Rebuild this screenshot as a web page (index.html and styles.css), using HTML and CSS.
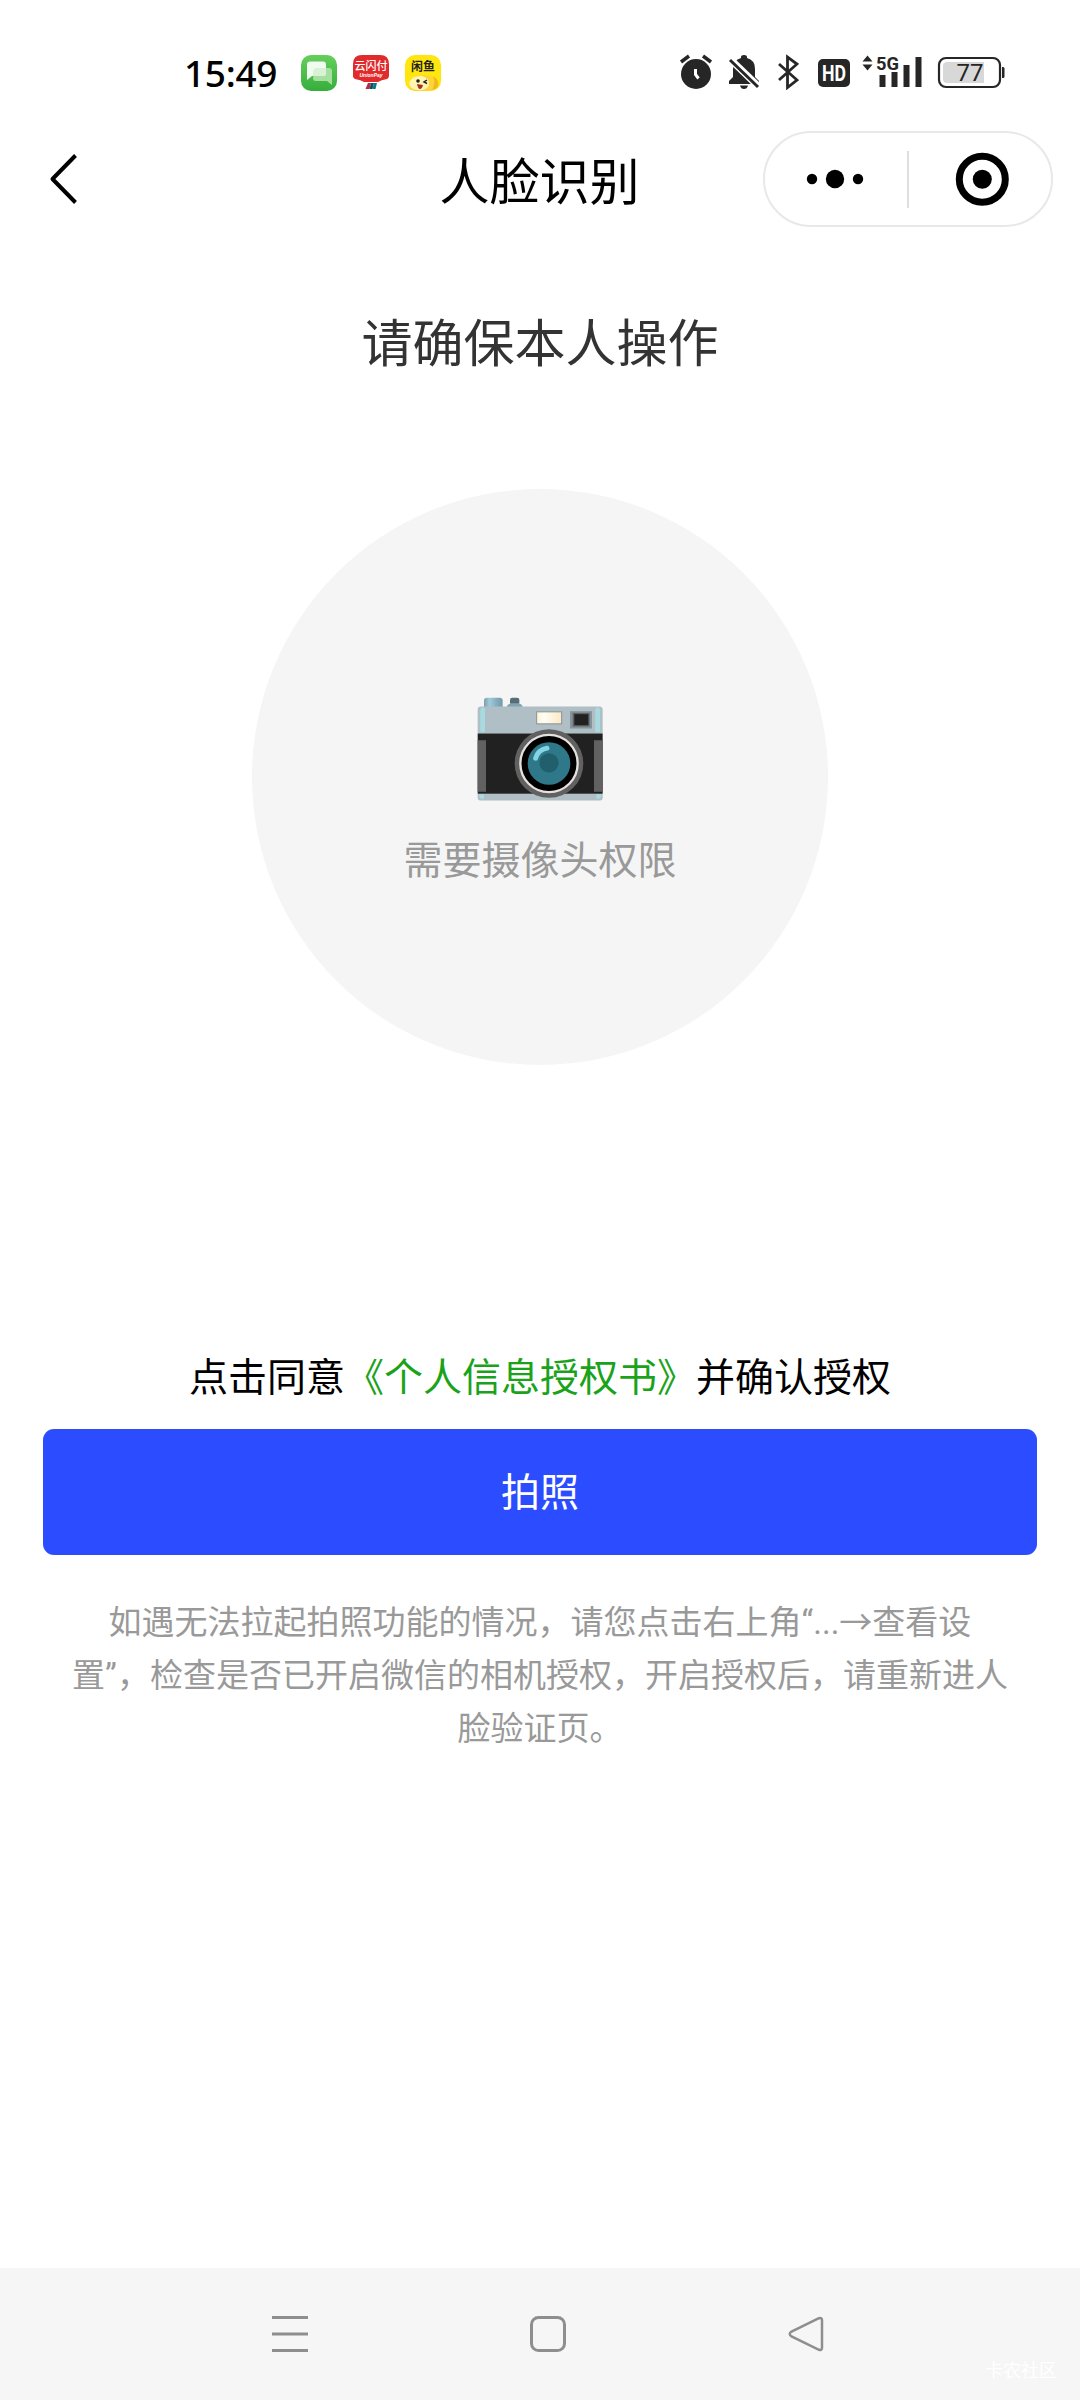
FILE: index.html
```html
<!DOCTYPE html>
<html lang="zh-CN">
<head>
<meta charset="utf-8">
<title>人脸识别</title>
<link rel="stylesheet" href="styles.css">
</head>
<body>
<div class="screen">
  <header class="status">
    <div class="status-left">
      <span class="time">15:49</span>
      <svg class="app" viewBox="0 0 36 36">
        <defs><linearGradient id="msg" x1="0" y1="0" x2="0" y2="1"><stop offset="0" stop-color="#66cf5c"/><stop offset="1" stop-color="#36ae3c"/></linearGradient></defs>
        <rect width="36" height="36" rx="10" fill="url(#msg)"/>
        <path d="M14 13h14a3 3 0 0 1 3 3v14l-5-4H15a3 3 0 0 1-3-3z" fill="#a5e0a0"/>
        <path d="M9 6.500h13a3 3 0 0 1 3 3V18a3 3 0 0 1-3 3H11l-5 4V9.500a3 3 0 0 1 3-3z" fill="#f2fbf0"/>
        <path d="M14 13h11v5a3 3 0 0 1-3 3H12v-5z" fill="#d9f2d6"/>
      </svg>
      <svg class="app" viewBox="0 0 36 36">
        <path d="M0 9Q0 0 9 0h18q9 0 9 9v12q0 2-2 3-6 1-9 3H11q-3-2-9-3-2-1-2-3z" fill="#e12a2b"/>
        <text x="18" y="15" class="pay">云闪付</text>
        <text x="18" y="22" class="pay-en">UnionPay</text>
        <path d="M15 28h3l-1.500 6h-4z" fill="#b52d3c"/><path d="M18 28h3l-1.500 6h-3z" fill="#164a72"/><path d="M21 28h3l-1.500 6h-3z" fill="#087c7c"/>
      </svg>
      <svg class="app" viewBox="0 0 36 36">
        <rect width="36" height="36" rx="10" fill="#ffe60f"/>
        <path d="M4 34q0-14 14-14 13 0 15 10l-4 5q-9 2-19 1z" fill="#ffd43a"/>
        <path d="M4 28q3-8 13-7 8 2 7 10-4 5-11 4-8 0-9-7z" fill="#fff4b0"/>
        <path d="M28 21q8 5 4 12l-5 2q4-7 1-14z" fill="#f0b91c"/>
        <text x="18" y="16" class="fish">闲鱼</text>
        <circle cx="13" cy="26" r="1.800" fill="#222"/><path d="M22 25l-3 2 3 1.500" fill="none" stroke="#222" stroke-width="1.500"/>
        <path d="M12 29l6 1q-1 4-3 4t-3-5z" fill="#a8301e"/>
      </svg>
    </div>
    <div class="status-right">
      <svg width="34" height="42" viewBox="679 48 34 42">
        <circle cx="696" cy="74" r="15" fill="#262626"/>
        <path d="M681 62l8-6M711 62l-8-6" stroke="#262626" stroke-width="3.500"/>
        <path d="M695.500 69v5.500l3 4" fill="none" stroke="#fff" stroke-width="3"/>
      </svg>
      <svg width="34" height="42" viewBox="727 48 34 42">
        <path d="M729 84v-3l4-4V69q0-9 8-11v-1q0-2 3-2t3 2v1q8 2 8 11v8l4 4v3z" fill="#262626"/>
        <path d="M740 85.500h8q-1 3.500-4 3.500t-4-3.500z" fill="#262626"/>
        <path d="M728 57l33 32" stroke="#fff" stroke-width="7"/>
        <path d="M730 60l28 27" stroke="#262626" stroke-width="3"/>
      </svg>
      <svg width="22" height="42" viewBox="777 48 22 42">
        <path d="M779 64l18 16-9.500 7.500V57l9.500 7-18 16" fill="none" stroke="#262626" stroke-width="2.800"/>
      </svg>
      <svg width="32" height="42" viewBox="818 48 32 42">
        <rect x="818" y="59" width="32" height="28" rx="5" fill="#262626"/>
        <text x="834" y="80.500" class="hd" textLength="24" lengthAdjust="spacingAndGlyphs">HD</text>
      </svg>
      <svg width="62" height="42" viewBox="861 48 62 42">
        <path d="M862.500 61.500l5-6 5 6zM862.500 64.500l5 6 5-6z" fill="#262626"/>
        <text x="876" y="69.500" class="net" textLength="23" lengthAdjust="spacingAndGlyphs">5G</text>
        <path d="M879.500 75h6v12h-6zM891.500 72h6v15h-6zM903.500 65h6v22h-6zM915.500 57h6v30h-6z" fill="#262626"/>
      </svg>
      <svg width="68" height="42" viewBox="937 48 68 42">
        <rect x="939" y="58" width="61" height="29" rx="7" fill="#fff" stroke="#262626" stroke-width="2.200"/>
        <path d="M947 62h37v21h-37q-4 0-4-4V66q0-4 4-4z" fill="#d8d8d8"/>
        <path d="M1002 67h1q1.500 0 1.500 1.500v8q0 1.500-1.500 1.500h-1z" fill="#262626"/>
        <text x="970" y="81" class="charge">77</text>
      </svg>
    </div>
  </header>

  <nav class="bar">
    <svg class="back" width="32" height="56" viewBox="49 151 32 56"><path d="M76.500 155.500L53.500 179l23 23.500" fill="none" stroke="#000" stroke-width="4" stroke-linejoin="round"/></svg>
    <h1 class="title">人脸识别</h1>
    <div class="capsule">
      <svg width="144" height="92" viewBox="765 133 144 92"><circle cx="812" cy="179" r="5.200"/><circle cx="835" cy="179" r="9.200"/><circle cx="858" cy="179" r="5.200"/></svg>
      <span class="divider"></span>
      <svg width="142" height="92" viewBox="907 133 142 92"><circle cx="982.300" cy="179.300" r="23" fill="none" stroke="#000" stroke-width="7"/><circle cx="982.300" cy="179.300" r="9.500"/></svg>
    </div>
  </nav>

  <main class="content">
    <h2 class="heading">请确保本人操作</h2>
    <section class="preview">
      <svg class="camera" viewBox="291 80 378 311">
        <defs>
          <linearGradient id="cap"><stop offset="0" stop-color="#78a0b0"/><stop offset=".3" stop-color="#a1cbd8"/><stop offset=".7" stop-color="#83abbb"/><stop offset="1" stop-color="#789aaa"/></linearGradient>
          <linearGradient id="flash"><stop offset="0" stop-color="#fff3d8"/><stop offset=".3" stop-color="#fffdf5"/><stop offset="1" stop-color="#fde8c2"/></linearGradient>
        </defs>
        <path d="M312 110V90q0-8 9-8h38q9 0 9 8v20z" fill="url(#cap)"/>
        <path d="M390 100V88q0-6 7-6h14q7 0 7 6v12z" fill="#546e7a"/>
        <path d="M380 110q2-10 12-10h24q10 0 12 10z" fill="#82a3b1"/>
        <path d="M293 190v-72q0-10 10-10h355q10 0 10 10v72z" fill="#b0bec5"/>
        <path d="M301 185v-65q0-9 7-9t7 9v65zM646 185v-65q0-9 7-9t7 9v65z" fill="#a8dbe1"/>
        <path d="M293 370h375v12q0 8-8 8H301q-8 0-8-8z" fill="#b0bec5"/>
        <path d="M298 371h14v12q-14 6-14-6zM649 371h14v6q0 12-14 6z" fill="#a8dbe1"/>
        <path d="M293 189h375v181H293z" fill="#212121"/>
        <path d="M293 209h25v155h-25zM642 209h26v155h-26z" fill="#616161"/>
        <rect x="470" y="124" width="75" height="36" fill="url(#flash)" stroke="#8b9294" stroke-width="3"/>
        <path d="M570 122h66v52h-66z" fill="#82939b"/><path d="M578 127h51v41h-51z" fill="#616161"/><path d="M583 131h42v33h-42z" fill="#212121"/>
        <circle cx="507" cy="279" r="103" fill="#616161"/>
        <circle cx="507" cy="279" r="86" fill="#000" stroke="#e6e1df" stroke-width="7"/>
        <circle cx="507" cy="279" r="64" fill="#2f7889"/>
        <circle cx="507" cy="277" r="29" fill="#225f6c"/>
        <path d="M467 263q7-25 34-30" fill="none" stroke="#82d5e2" stroke-width="15" stroke-linecap="round"/>
      </svg>
      <p class="permission">需要摄像头权限</p>
    </section>
    <p class="consent">点击同意<span class="link">《个人信息授权书》</span>并确认授权</p>
    <button class="shoot">拍照</button>
    <p class="hint">如遇无法拉起拍照功能的情况，请您点击右上角“...→查看设<br>置”，检查是否已开启微信的相机授权，开启授权后，请重新进人<br>脸验证页。</p>
  </main>

  <footer class="keys">
    <svg width="36" height="36" viewBox="0 0 36 36"><path d="M0 1.500h36M0 18h36M0 34.500h36" stroke="#8e8e8e" stroke-width="3"/></svg>
    <svg width="36" height="36" viewBox="0 0 36 36"><rect x="1.500" y="1.500" width="33" height="33" rx="7" fill="none" stroke="#8e8e8e" stroke-width="3"/></svg>
    <svg width="36" height="36" viewBox="0 0 36 36"><path d="M31 2.200L3.500 15.500q-3.500 2.500 0 5L31 33.800q3 .7 3-2V4.200q0-2.700-3-2z" fill="none" stroke="#8e8e8e" stroke-width="2.500"/></svg>
    <span class="watermark">卡农社区</span>
  </footer>
</div>
</body>
</html>
```
FILE: styles.css
```css
* { box-sizing: border-box; margin: 0; padding: 0; }

body {
  background: #fff;
  font-family: "Noto Sans CJK SC", sans-serif;
  color: #000;
}

svg { display: block; flex: none; }

.screen {
  width: 1080px;
  height: 2400px;
  display: flex;
  flex-direction: column;
}

.status {
  height: 131px;
  padding: 48px 75px 0 184px;
  display: flex;
  justify-content: space-between;
  align-items: flex-start;
}

.status-left { display: flex; gap: 16px; align-items: center; height: 49px; }
.time {
  width: 101px;
  font: 500 37px/37px "Noto Sans", sans-serif;
  letter-spacing: -0.3px;
  white-space: nowrap;
  padding-bottom: 1px;
}
.app { width: 36px; height: 36px; }
.pay { font: 500 11px "Noto Sans CJK SC", sans-serif; fill: #fff; text-anchor: middle; }
.pay-en { font: italic 700 5px "Liberation Sans", sans-serif; fill: #fff; text-anchor: middle; }
.fish { font: 700 12px "Noto Sans CJK SC", sans-serif; fill: #222; text-anchor: middle; }

.status-right { display: flex; }
.status-right svg + svg { margin-left: 14px; }
.status-right svg:nth-child(3) { margin-left: 16px; }
.status-right svg:nth-child(4) { margin-left: 19px; }
.status-right svg:nth-child(5) { margin-left: 11px; }
.hd { font: 700 22px Roboto, sans-serif; fill: #fff; text-anchor: middle; }
.net { font: 700 19px Roboto, sans-serif; fill: #262626; }
.charge { font: 400 24px Roboto, sans-serif; fill: #262626; text-anchor: middle; }

.bar {
  height: 96px;
  padding: 0 27px 0 48px;
  display: grid;
  grid-template-columns: 290px 1fr 290px;
  align-items: center;
}
.title {
  font-size: 50px;
  font-weight: 400;
  line-height: 72px;
  text-align: center;
  margin: -3px 0 0 -22px;
}
.capsule {
  width: 290px;
  height: 96px;
  border: 2px solid #e8e8e8;
  border-radius: 48px;
  display: flex;
  align-items: center;
}
.capsule svg:last-child { margin-left: -2px; }
.divider { width: 2px; height: 57px; background: #dedede; margin-left: -2px; }

.content { flex: 1; display: flex; flex-direction: column; align-items: center; }
.heading {
  margin-top: 76px;
  font-size: 51px;
  font-weight: 400;
  line-height: 74px;
  color: #333;
}
.preview {
  width: 576px;
  height: 576px;
  margin-top: 112px;
  border-radius: 50%;
  background: #f5f5f5;
  display: flex;
  flex-direction: column;
  align-items: center;
}
.camera { width: 126px; height: 104px; margin-top: 208px; }
.permission { margin-top: 28px; font-size: 39px; line-height: 56px; color: #999; }
.consent { margin-top: 281px; font-size: 39px; line-height: 56px; }
.link { color: #1aa31a; }
.shoot {
  width: 994px;
  height: 126px;
  margin-top: 27px;
  padding-bottom: 6px;
  border: 0;
  border-radius: 11px;
  background: #2b4dff;
  color: #fff;
  font: 400 39px/56px "Noto Sans CJK SC", sans-serif;
}
.hint {
  margin-top: 41px;
  font: 400 33px/53px Roboto, "Noto Sans CJK SC", sans-serif;
  color: #999;
  text-align: center;
  white-space: nowrap;
}

.keys {
  position: relative;
  height: 132px;
  padding: 0 256px 0 272px;
  background: #f6f6f6;
  display: flex;
  justify-content: space-between;
  align-items: center;
}
.watermark {
  position: absolute;
  right: 23px;
  bottom: 18px;
  font-size: 18px;
  line-height: 26px;
  color: #fff;
}
```
